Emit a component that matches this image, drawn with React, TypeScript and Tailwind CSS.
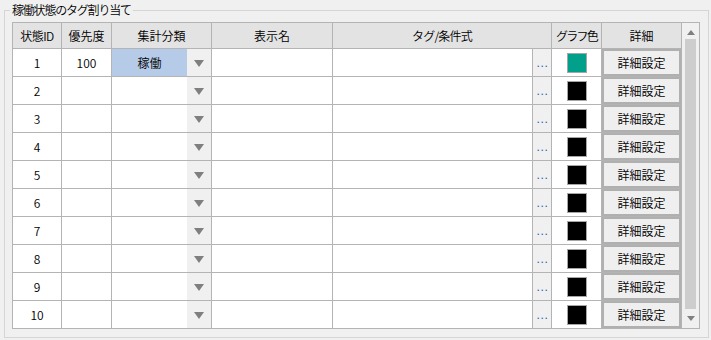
import React from "react";

const FONT = { fontFamily: '"Noto Sans CJK JP", "Noto Sans", sans-serif' };

function DownTri({ color = "#7f7f7f", w = 10, h = 7 }: { color?: string; w?: number; h?: number }) {
  return (
    <svg width={w} height={h} viewBox={`0 0 ${w} ${h}`}>
      <polygon points={`0,0 ${w},0 ${w / 2},${h}`} fill={color} />
    </svg>
  );
}

function UpTri({ color = "#7f7f7f", w = 8, h = 5 }: { color?: string; w?: number; h?: number }) {
  return (
    <svg width={w} height={h} viewBox={`0 0 ${w} ${h}`}>
      <polygon points={`0,${h} ${w},${h} ${w / 2},0`} fill={color} />
    </svg>
  );
}

const line = "border-[#b4b4b4]";

function HeaderRow() {
  const cell = `flex items-center justify-center border-r border-b ${line} bg-[#e3e3e3] h-[26px] shrink-0`;
  return (
    <div className="flex">
      <div className={`${cell} w-[49px] tracking-[-0.5px]`}>状態ID</div>
      <div className={`${cell} w-[50px]`}>優先度</div>
      <div className={`${cell} w-[100px]`}>集計分類</div>
      <div className={`${cell} w-[121px]`}>表示名</div>
      <div className={`${cell} w-[219px] tracking-[-0.8px]`}>タグ/条件式</div>
      <div className={`${cell} w-[50px] tracking-[-1.8px]`}>グラフ色</div>
      <div className={`${cell} w-[80px]`}>詳細</div>
    </div>
  );
}

function Row({ id, prio, cat, color }: { id: number; prio?: string; cat?: string; color: string }) {
  const base = `flex items-center justify-center border-b ${line} h-[28px] shrink-0`;
  return (
    <div className="flex">
      <div className={`${base} border-r w-[49px] bg-white`}>{id}</div>
      <div className={`${base} border-r w-[50px] bg-white`}>{prio ?? ""}</div>
      <div className={`${base} w-[75px] ${cat ? "bg-[#b6cbe8]" : "bg-white"}`}>{cat ?? ""}</div>
      <div className={`${base} border-r w-[25px] bg-[#f0f0f0] pt-[1px]`}>
        <DownTri />
      </div>
      <div className={`${base} border-r w-[121px] bg-white`} />
      <div className={`${base} border-r w-[200px] bg-white`} />
      <div
        className={`${base} border-r w-[19px] bg-[#f0f0f0] text-[#1d5fa8] tracking-[0.6px] pl-[1px] pt-[1px]`}
        style={{ fontFamily: '"Liberation Sans", sans-serif' }}
      >
        ...
      </div>
      <div className={`${base} border-r w-[50px] bg-white`}>
        <div className="w-[20px] h-[20px] border border-[#a6a6a6] mt-[1px]" style={{ backgroundColor: color }} />
      </div>
      <div className={`${base} border-r w-[80px] bg-white`}>
        <div className="w-full h-full border-2 border-[#b0b0b0] bg-[#efefef] flex items-center justify-center">
          詳細設定
        </div>
      </div>
    </div>
  );
}

export default function App() {
  const rows = Array.from({ length: 10 }, (_, i) => i + 1);
  return (
    <div
      className="w-[711px] h-[340px] bg-[#f0f0f0] pt-[10px] pl-[4px] text-[12px] leading-[16px] font-[350] text-black"
      style={FONT}
    >
      <div className="relative w-[705px] h-[328px] border border-[#d5d5d5] pl-[7px] pt-[11px]">
        <div className="absolute left-[5px] -top-[9px] h-[16px] px-[2px] bg-[#f0f0f0] leading-[16px] tracking-[-1.2px]">
          稼働状態のタグ割り当て
        </div>
        <div className="flex">
          <div className={`flex flex-col border-l border-t ${line}`}>
            <HeaderRow />
            {rows.map((r) => (
              <Row
                key={r}
                id={r}
                prio={r === 1 ? "100" : undefined}
                cat={r === 1 ? "稼働" : undefined}
                color={r === 1 ? "#00a08a" : "#000000"}
              />
            ))}
          </div>
          <div className={`w-[18px] h-[307px] border-t border-r border-b ${line} bg-[#f0f0f0] flex flex-col items-center`}>
            <div className="h-[16px] flex items-center justify-center pt-[2px]">
              <UpTri />
            </div>
            <div className="w-[11px] h-[270px] bg-[#cdcdcd]" />
            <div className="flex-1 flex items-center justify-center">
              <DownTri w={8} h={5} />
            </div>
          </div>
        </div>
      </div>
    </div>
  );
}
